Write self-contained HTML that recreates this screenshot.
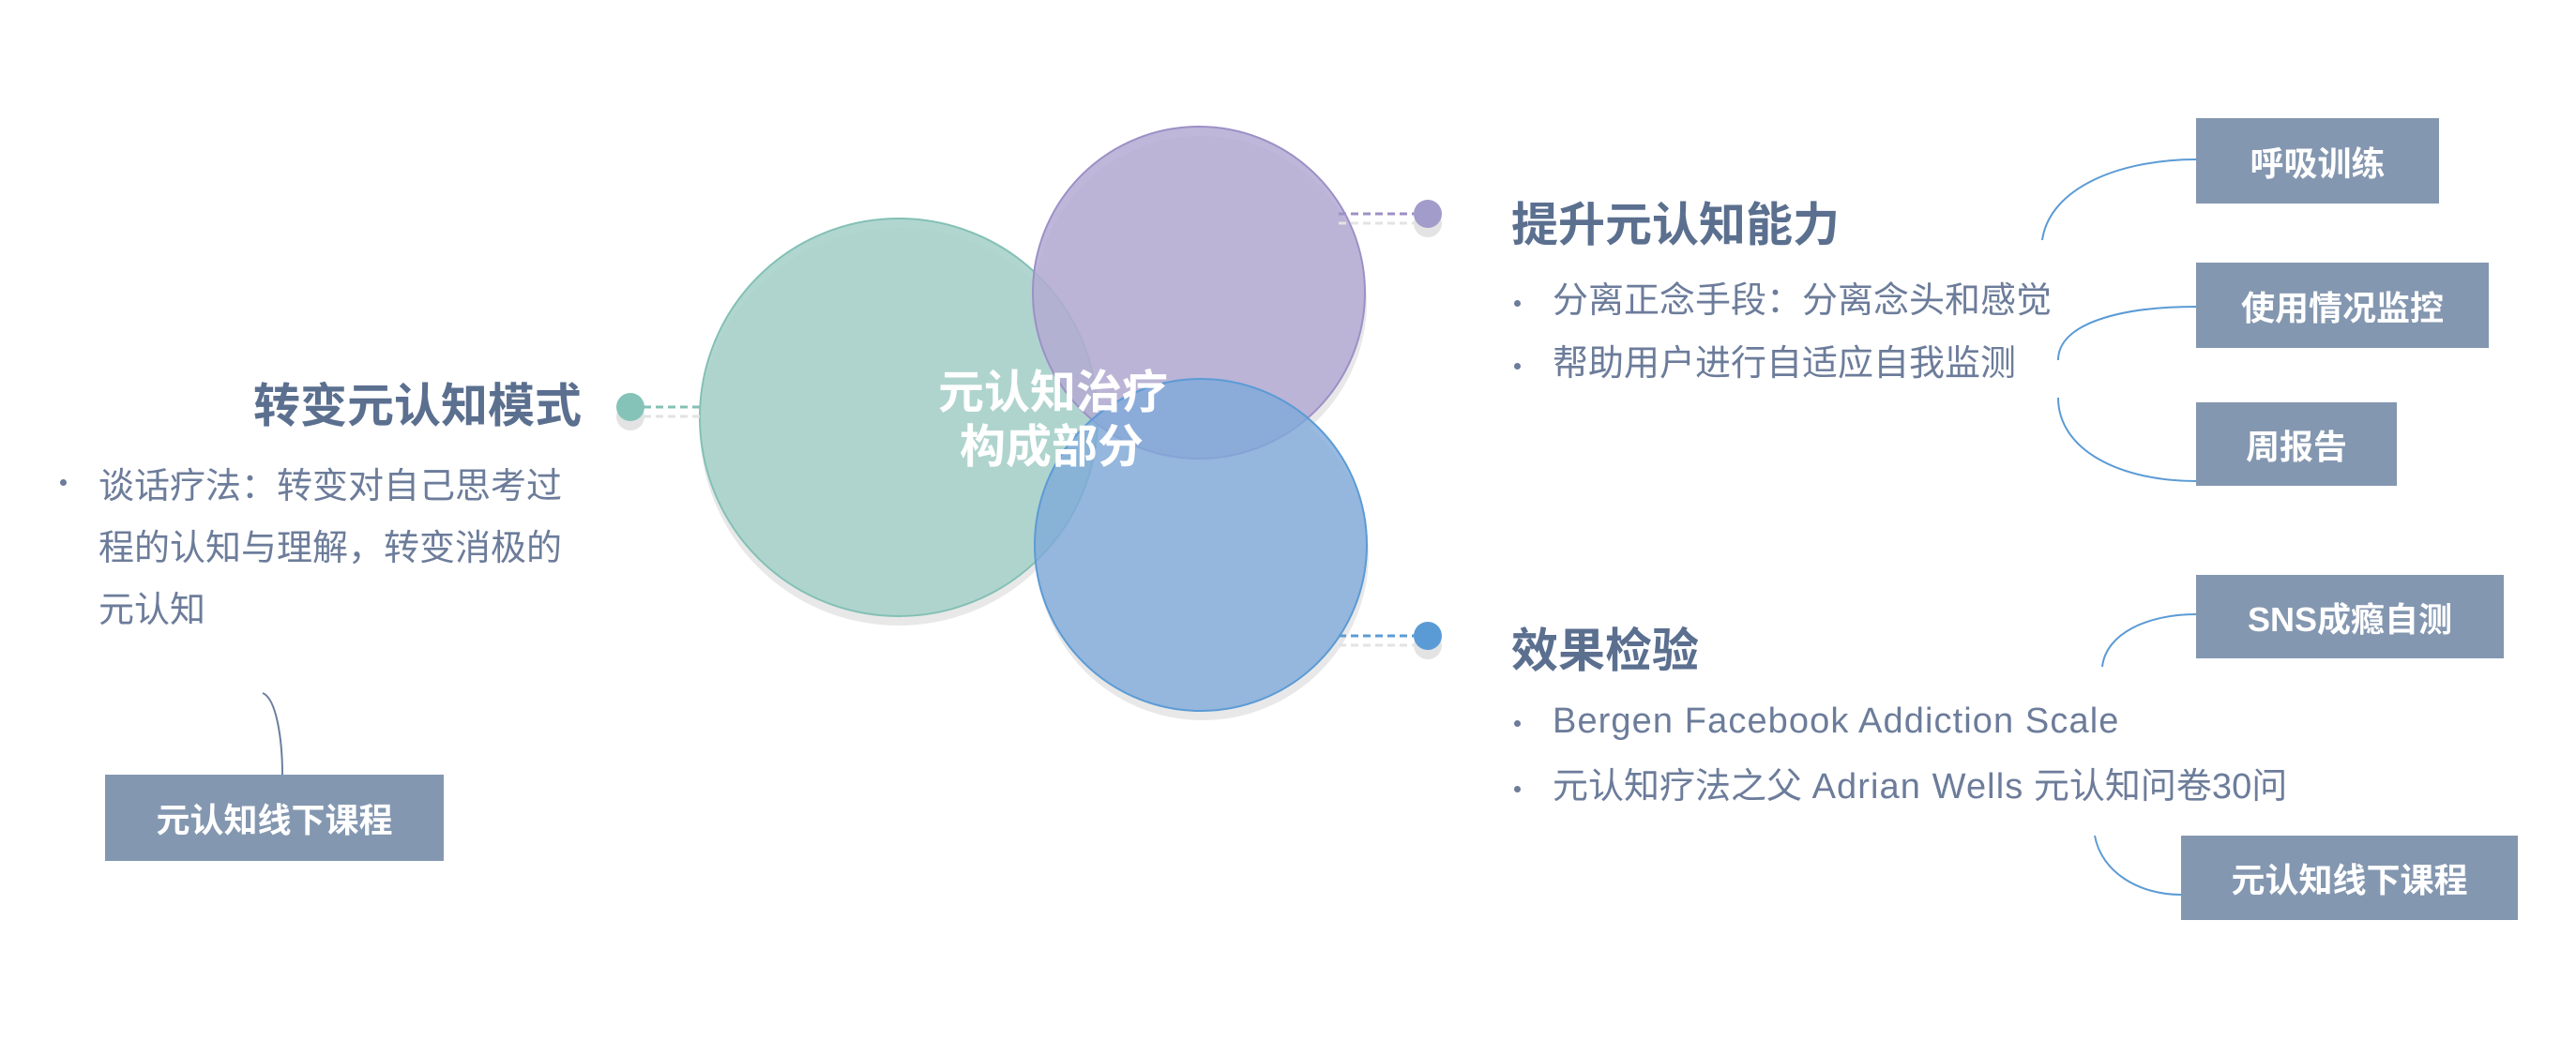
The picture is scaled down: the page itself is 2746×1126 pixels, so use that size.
<!DOCTYPE html>
<html><head><meta charset="utf-8"><style>
html,body{margin:0;padding:0;background:#fff;}
body{width:2746px;height:1126px;position:relative;overflow:hidden;font-family:"Liberation Sans","Noto Sans CJK SC",sans-serif;}
.t{position:absolute;white-space:nowrap;line-height:1;}
.h{font-weight:bold;font-size:50px;color:#5b6f8f;}
.b{font-size:38px;color:#6c7c9a;}
.l{letter-spacing:1.1px;}
.dot{position:absolute;width:7px;height:7px;border-radius:50%;background:#6c7c9a;}
.box{position:absolute;background:#8497b0;color:#fff;font-weight:bold;font-size:36px;display:flex;align-items:center;justify-content:center;}
</style></head><body>
<svg width="2746" height="1126" style="position:absolute;left:0;top:0">
 <circle cx="958" cy="455" r="212" fill="#e8e8e8"/>
 <circle cx="1280" cy="322" r="177" fill="#e8e8e8"/>
 <circle cx="1282" cy="591" r="177" fill="#e8e8e8"/>
 <circle cx="958" cy="445" r="212" fill="#a8d2cb" fill-opacity="0.9" stroke="#84c0b5" stroke-width="2"/>
 <circle cx="1278" cy="312" r="177" fill="#b3aad2" fill-opacity="0.85" stroke="#9d90c6" stroke-width="2"/>
 <circle cx="1280" cy="581" r="177" fill="#7fa9da" fill-opacity="0.8" stroke="#5b9bd5" stroke-width="2"/>
 <line x1="686" y1="434" x2="748" y2="434" stroke="#84c0b5" stroke-width="3" stroke-dasharray="8 5"/>
 <line x1="686" y1="444" x2="748" y2="444" stroke="#e3e3e3" stroke-width="3" stroke-dasharray="8 5"/>
 <circle cx="672" cy="444" r="15" fill="#e3e3e3"/>
 <circle cx="672" cy="434" r="15" fill="#85c3b8"/>
 <line x1="1427" y1="228" x2="1508" y2="228" stroke="#9d90c6" stroke-width="3" stroke-dasharray="8 5"/>
 <line x1="1427" y1="238" x2="1508" y2="238" stroke="#e3e3e3" stroke-width="3" stroke-dasharray="8 5"/>
 <circle cx="1522" cy="238" r="15" fill="#e3e3e3"/>
 <circle cx="1522" cy="228" r="15" fill="#a29ccb"/>
 <line x1="1427" y1="678" x2="1508" y2="678" stroke="#5b9bd5" stroke-width="3" stroke-dasharray="8 5"/>
 <line x1="1427" y1="688" x2="1508" y2="688" stroke="#e3e3e3" stroke-width="3" stroke-dasharray="8 5"/>
 <circle cx="1522" cy="688" r="15" fill="#e3e3e3"/>
 <circle cx="1522" cy="678" r="15" fill="#5b9bd5"/>
 <g fill="none" stroke="#5b9bd5" stroke-width="2">
  <path d="M2177 256 C2185 200 2260 170 2341 170"/>
  <path d="M2194 384 C2194 345 2260 327 2341 327"/>
  <path d="M2194 424 C2194 480 2260 513 2341 513"/>
  <path d="M2241 711 C2245 675 2290 655 2341 655"/>
  <path d="M2233 891 C2240 930 2280 954 2325 954"/>
 </g>
 <path d="M280 739 C295 745 301 790 301 826" fill="none" stroke="#6b7fa0" stroke-width="2"/>
</svg>
<div class="t" style="left:1000px;top:390px;width:242px;text-align:center;color:#fff;font-weight:bold;font-size:49px;line-height:58px;">元认知治疗<br>构成部分</div>

<div class="t h" style="left:220px;width:400px;text-align:right;top:408px;">转变元认知模式</div>
<div class="dot" style="left:64px;top:511px;"></div>
<div class="t b" style="left:105px;top:486px;line-height:66px;">谈话疗法：转变对自己思考过<br>程的认知与理解，转变消极的<br>元认知</div>
<div class="box" style="left:112px;top:826px;width:361px;height:92px;">元认知线下课程</div>

<div class="t h" style="left:1611px;top:215px;">提升元认知能力</div>
<div class="dot" style="left:1614px;top:320px;"></div>
<div class="t b" style="left:1655px;top:302px;">分离正念手段：分离念头和感觉</div>
<div class="dot" style="left:1614px;top:387px;"></div>
<div class="t b" style="left:1655px;top:369px;">帮助用户进行自适应自我监测</div>

<div class="t h" style="left:1611px;top:669px;">效果检验</div>
<div class="dot" style="left:1614px;top:768px;"></div>
<div class="t b l" style="left:1655px;top:750px;">Bergen Facebook Addiction Scale</div>
<div class="dot" style="left:1614px;top:838px;"></div>
<div class="t b" style="left:1655px;top:820px;">元认知疗法之父 <span class="l">Adrian Wells</span> 元认知问卷30问</div>

<div class="box" style="left:2341px;top:126px;width:259px;height:91px;">呼吸训练</div>
<div class="box" style="left:2341px;top:280px;width:312px;height:91px;">使用情况监控</div>
<div class="box" style="left:2341px;top:429px;width:214px;height:89px;">周报告</div>
<div class="box" style="left:2341px;top:613px;width:328px;height:89px;">SNS成瘾自测</div>
<div class="box" style="left:2325px;top:891px;width:359px;height:90px;">元认知线下课程</div>
</body></html>
